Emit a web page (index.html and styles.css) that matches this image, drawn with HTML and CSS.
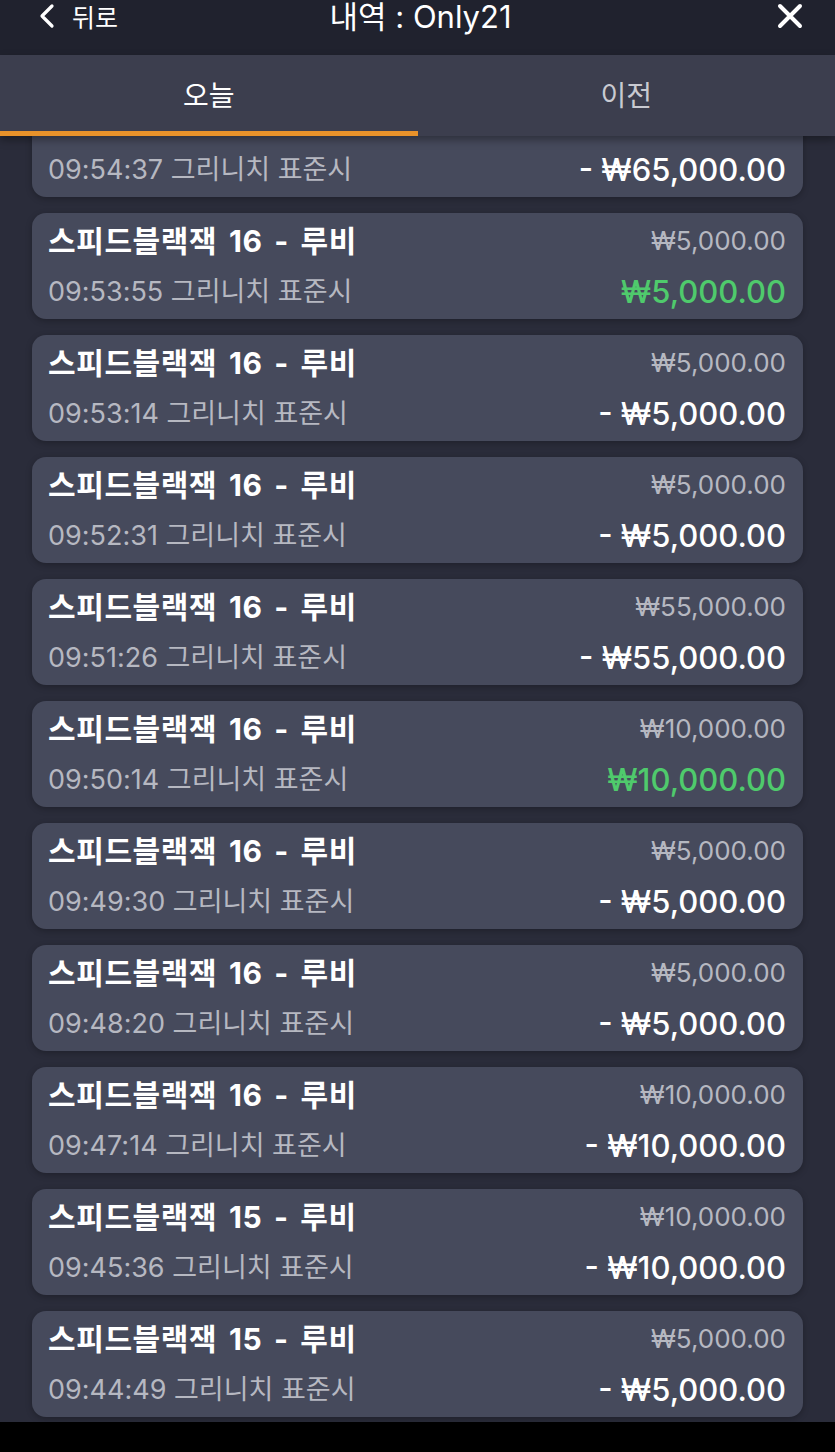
FILE: index.html
```html
<!DOCTYPE html>
<html>
<head>
  <title>내역 : Only21</title>
  <link rel="stylesheet" href="styles.css">
</head>
<body>
  <div class="app">
    <div class="topbar">
      <div class="back">
        <svg width="18" height="26" viewBox="0 0 18 26"><path d="M14 3 L4 13 L14 23" fill="none" stroke="#fff" stroke-width="3.2" stroke-linecap="round" stroke-linejoin="round"/></svg>
        <span>뒤로</span>
      </div>
      <div class="title">내역 : Only21</div>
      <div class="close">
        <svg width="26" height="26" viewBox="0 0 26 26"><path d="M3 3 L23 23 M23 3 L3 23" stroke="#fff" stroke-width="4" stroke-linecap="round"/></svg>
      </div>
    </div>

    <div class="tabs">
      <div class="tab active">오늘</div>
      <div class="tab">이전</div>
    </div>

    <div class="list">
      <div class="list-inner">
        <div class="item">
          <div class="row"><span class="name">스피드블랙잭 16 - 루비</span><span class="bet">₩65,000.00</span></div>
          <div class="row"><span class="time">09:54:37 그리니치 표준시</span><span class="amount">- ₩65,000.00</span></div>
        </div>
        <div class="item">
          <div class="row"><span class="name">스피드블랙잭 16 - 루비</span><span class="bet">₩5,000.00</span></div>
          <div class="row"><span class="time">09:53:55 그리니치 표준시</span><span class="amount win">₩5,000.00</span></div>
        </div>
        <div class="item">
          <div class="row"><span class="name">스피드블랙잭 16 - 루비</span><span class="bet">₩5,000.00</span></div>
          <div class="row"><span class="time">09:53:14 그리니치 표준시</span><span class="amount">- ₩5,000.00</span></div>
        </div>
        <div class="item">
          <div class="row"><span class="name">스피드블랙잭 16 - 루비</span><span class="bet">₩5,000.00</span></div>
          <div class="row"><span class="time">09:52:31 그리니치 표준시</span><span class="amount">- ₩5,000.00</span></div>
        </div>
        <div class="item">
          <div class="row"><span class="name">스피드블랙잭 16 - 루비</span><span class="bet">₩55,000.00</span></div>
          <div class="row"><span class="time">09:51:26 그리니치 표준시</span><span class="amount">- ₩55,000.00</span></div>
        </div>
        <div class="item">
          <div class="row"><span class="name">스피드블랙잭 16 - 루비</span><span class="bet">₩10,000.00</span></div>
          <div class="row"><span class="time">09:50:14 그리니치 표준시</span><span class="amount win">₩10,000.00</span></div>
        </div>
        <div class="item">
          <div class="row"><span class="name">스피드블랙잭 16 - 루비</span><span class="bet">₩5,000.00</span></div>
          <div class="row"><span class="time">09:49:30 그리니치 표준시</span><span class="amount">- ₩5,000.00</span></div>
        </div>
        <div class="item">
          <div class="row"><span class="name">스피드블랙잭 16 - 루비</span><span class="bet">₩5,000.00</span></div>
          <div class="row"><span class="time">09:48:20 그리니치 표준시</span><span class="amount">- ₩5,000.00</span></div>
        </div>
        <div class="item">
          <div class="row"><span class="name">스피드블랙잭 16 - 루비</span><span class="bet">₩10,000.00</span></div>
          <div class="row"><span class="time">09:47:14 그리니치 표준시</span><span class="amount">- ₩10,000.00</span></div>
        </div>
        <div class="item">
          <div class="row"><span class="name">스피드블랙잭 15 - 루비</span><span class="bet">₩10,000.00</span></div>
          <div class="row"><span class="time">09:45:36 그리니치 표준시</span><span class="amount">- ₩10,000.00</span></div>
        </div>
        <div class="item">
          <div class="row"><span class="name">스피드블랙잭 15 - 루비</span><span class="bet">₩5,000.00</span></div>
          <div class="row"><span class="time">09:44:49 그리니치 표준시</span><span class="amount">- ₩5,000.00</span></div>
        </div>
      </div>
    </div>

    <div class="navbar"></div>
  </div>
</body>
</html>
```

FILE: styles.css
```css
html, body {
  margin: 0;
  padding: 0;
  height: 100%;
  background-color: #000;
}

body {
  font-family: "Inter", "Noto Sans CJK KR", sans-serif;
  color: #fff;
}

.app {
  display: flex;
  flex-direction: column;
  height: 1452px;
  overflow: hidden;
}

.topbar {
  display: flex;
  align-items: flex-start;
  justify-content: space-between;
  height: 55px;
  padding: 0 32px 0 38px;
  background-color: #20222e;
}

.topbar .back {
  display: flex;
  align-items: center;
  gap: 16px;
  width: 120px;
  height: 32px;
  font-size: 25px;
}

.topbar .title {
  font-size: 31px;
  line-height: 32px;
  padding-top: 1px;
}

.topbar .close {
  display: flex;
  justify-content: flex-end;
  align-items: center;
  width: 120px;
  height: 32px;
}

.tabs {
  display: flex;
  height: 81px;
  background-color: #3c3e4e;
  box-shadow: 0 4px 8px rgba(0, 0, 0, 0.35);
  position: relative;
  z-index: 1;
}

.tab {
  flex: 1;
  display: flex;
  justify-content: center;
  align-items: center;
  font-size: 28px;
  color: #c9cad1;
  border-bottom: 5px solid transparent;
  padding-top: 2px;
}

.tab.active {
  color: #fff;
  border-bottom-color: #e8922a;
}

.list {
  flex: 1;
  overflow: hidden;
  background-color: #2a2c3a;
}

.list-inner {
  display: flex;
  flex-direction: column;
  gap: 16px;
  padding: 0 32px;
  margin-top: -45px;
}

.item {
  display: flex;
  flex-direction: column;
  gap: 17px;
  height: 106px;
  box-sizing: border-box;
  padding: 11px 17px 0 16px;
  background-color: #464a5c;
  border-radius: 14px;
  box-shadow: 0 2px 6px rgba(0, 0, 0, 0.25);
}

.row {
  display: flex;
  justify-content: space-between;
  align-items: center;
  height: 34px;
  line-height: 34px;
}

.name {
  font-size: 30px;
  font-weight: 700;
  letter-spacing: 0.6px;
  word-spacing: 4px;
}

.time {
  font-size: 27px;
  color: #b6b8c1;
}

.bet {
  font-size: 26px;
  color: #b6b8c1;
}

.amount {
  font-size: 31px;
  font-weight: 500;
}

.amount.win {
  color: #4fca6c;
}

.navbar {
  height: 30px;
  flex-shrink: 0;
  background-color: #000;
}
```
